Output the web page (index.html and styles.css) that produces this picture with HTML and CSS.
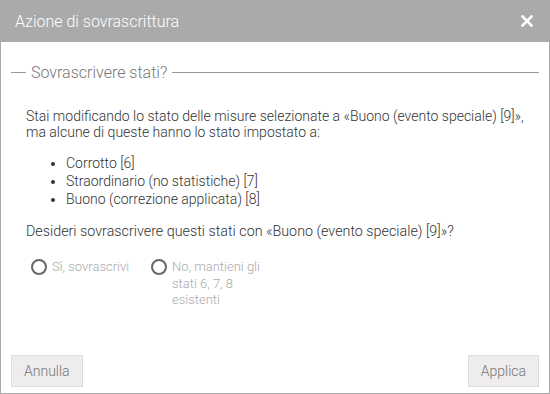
FILE: index.html
```html
<!DOCTYPE html>
<html lang="it">
<head>
  <meta charset="UTF-8" />
  <meta name="viewport" content="width=device-width, initial-scale=1.0"/>
  <title>Azione di sovrascrittura</title>
  <link rel="stylesheet" href="styles.css">
</head>
<body>
  <div class="dialog">
    <div class="dialog-header">
      <span class="dialog-title">Azione di sovrascrittura</span>
      <button class="close-btn" aria-label="Chiudi">
        <svg width="12" height="12" viewBox="0 0 12 12">
          <path d="M1.5 1.5 L10.5 10.5 M10.5 1.5 L1.5 10.5" stroke="#fff" stroke-width="2.6" stroke-linecap="square"/>
        </svg>
      </button>
    </div>

    <div class="dialog-body">
      <div class="section-title">Sovrascrivere stati?</div>

      <div class="content">
        <p class="intro">Stai modificando lo stato delle misure selezionate a «Buono (evento speciale) [9]», ma alcune di queste hanno lo stato impostato a:</p>
        <ul class="states">
          <li>Corrotto [6]</li>
          <li>Straordinario (no statistiche) [7]</li>
          <li>Buono (correzione applicata) [8]</li>
        </ul>
        <p class="question">Desideri sovrascrivere questi stati con «Buono (evento speciale) [9]»?</p>

        <div class="options">
          <label class="option">
            <span class="radio"></span>
            <span class="option-text">Sì, sovrascrivi</span>
          </label>
          <label class="option">
            <span class="radio"></span>
            <span class="option-text">No, mantieni gli stati 6, 7, 8 esistenti</span>
          </label>
        </div>
      </div>

      <div class="actions">
        <button class="btn">Annulla</button>
        <button class="btn">Applica</button>
      </div>
    </div>
  </div>
</body>
</html>
```

FILE: styles.css
```css
html, body {
  margin: 0;
  padding: 0;
  height: 100%;
  background-color: white;
  font-family: Roboto, "Liberation Sans", sans-serif;
  font-weight: 300;
  color: #333;
}

.dialog {
  display: flex;
  flex-direction: column;
  height: 394px;
}

.dialog-header {
  height: 42px;
  flex: 0 0 auto;
  background-color: #aaa;
  display: flex;
  align-items: center;
  justify-content: space-between;
  padding: 0 17px 0 15px;
}

.dialog-title {
  color: #fff;
  font-size: 16px;
}

.close-btn {
  border: none;
  background: none;
  padding: 0;
  width: 12px;
  height: 12px;
  display: flex;
  cursor: pointer;
}

.dialog-body {
  flex: 1;
  display: flex;
  flex-direction: column;
  border: 1px solid #aaa;
  border-top: none;
}

.section-title {
  display: flex;
  align-items: center;
  gap: 5px;
  margin: 21px 10px 0 10px;
  font-size: 16px;
  line-height: 19px;
  color: #777;
}

.section-title::before {
  content: "";
  width: 15px;
  border-top: 1px solid #999;
}

.section-title::after {
  content: "";
  flex: 1;
  border-top: 1px solid #999;
}

.content {
  flex: 1;
  padding: 0 25px;
  font-size: 14px;
}

.intro {
  margin: 26px 0 0 0;
  line-height: 16px;
}

.states {
  margin: 14px 0 0 0;
  padding-left: 40px;
  line-height: 18px;
}

.question {
  margin: 15px 0 0 0;
  font-size: 14.3px;
  line-height: 16px;
}

.options {
  display: flex;
  margin-top: 20px;
  padding-left: 5px;
}

.option {
  width: 120px;
  display: flex;
  align-items: flex-start;
  gap: 5px;
  font-size: 13px;
  line-height: 16.5px;
  color: #aaa;
}

.radio {
  flex: 0 0 auto;
  width: 12px;
  height: 12px;
  border: 2px solid #666;
  border-radius: 50%;
}

.option-text {
  flex: 1;
}

.actions {
  display: flex;
  justify-content: space-between;
  padding: 0 10px 6px 10px;
}

.btn {
  height: 32px;
  padding: 0 12px;
  font-family: Roboto, "Liberation Sans", sans-serif;
  font-weight: 300;
  font-size: 14px;
  color: #777;
  background-color: #eeeced;
  border: 1px solid #ddd;
  border-radius: 0;
}
```
